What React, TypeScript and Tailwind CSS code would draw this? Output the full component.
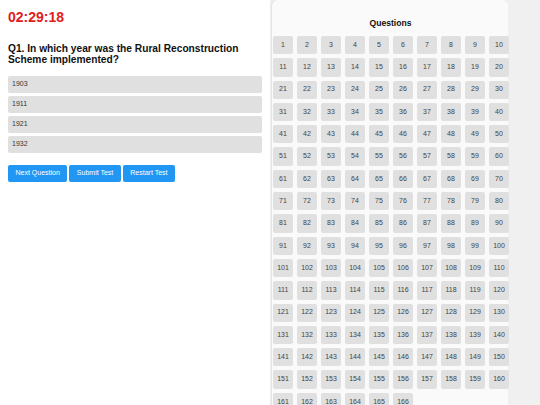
const options = ['1903', '1911', '1921', '1932'];
const questionNumbers = Array.from({ length: 166 }, (_, i) => i + 1);

export default function App() {
  return (
    <div className="flex min-h-[405px] w-[540px] font-['Liberation_Sans',Arial,sans-serif] text-[#222]">
      {/* Question area */}
      <div className="w-[270px] shrink-0 bg-white px-[8px] pt-[10px]">
        <div className="text-[14px] font-bold leading-[15.6px] text-[#e21b1b]">02:29:18</div>

        <h2 className="mt-[17px] text-[10.2px] font-bold leading-[11.3px] text-[#111]">
          Q1. In which year was the Rural Reconstruction Scheme implemented?
        </h2>

        <div className="mt-[11px] flex flex-col gap-[3px]">
          {options.map(opt => (
            <div
              key={opt}
              className="flex h-[17px] items-center rounded-[2px] bg-[#e0e0e0] pl-[4px] text-[7px] text-[#333]"
            >
              {opt}
            </div>
          ))}
        </div>

        <div className="mt-[12px] flex gap-[2px]">
          <button className="h-[17px] rounded-[2px] bg-[#2196f3] px-[7.5px] text-[7px] text-white">Next Question</button>
          <button className="h-[17px] rounded-[2px] bg-[#2196f3] px-[7.5px] text-[7px] text-white">Submit Test</button>
          <button className="h-[17px] rounded-[2px] bg-[#2196f3] px-[7.5px] text-[7px] text-white">Restart Test</button>
        </div>
      </div>

      {/* Question palette */}
      <div className="flex-1 bg-[#f0f0f0] pl-[2px]">
        <div className="w-[236px] rounded-t-[6px] bg-[#fafafa] pl-[1px] shadow-[-1px_0_2px_rgba(0,0,0,0.06)]">
          <h3 className="pt-[18px] text-center text-[8.6px] font-bold leading-[10px] text-[#111]">Questions</h3>
          <div className="mt-[8px] grid grid-cols-[repeat(10,20px)] gap-x-[4px] gap-y-[4px]">
            {questionNumbers.map(n => (
              <button
                key={n}
                className="flex h-[18.3px] w-[20px] items-center justify-center rounded-[2px] bg-[#e0e0e0] text-[7px] text-[#444]"
              >
                {n}
              </button>
            ))}
          </div>
        </div>
      </div>
    </div>
  );
}
